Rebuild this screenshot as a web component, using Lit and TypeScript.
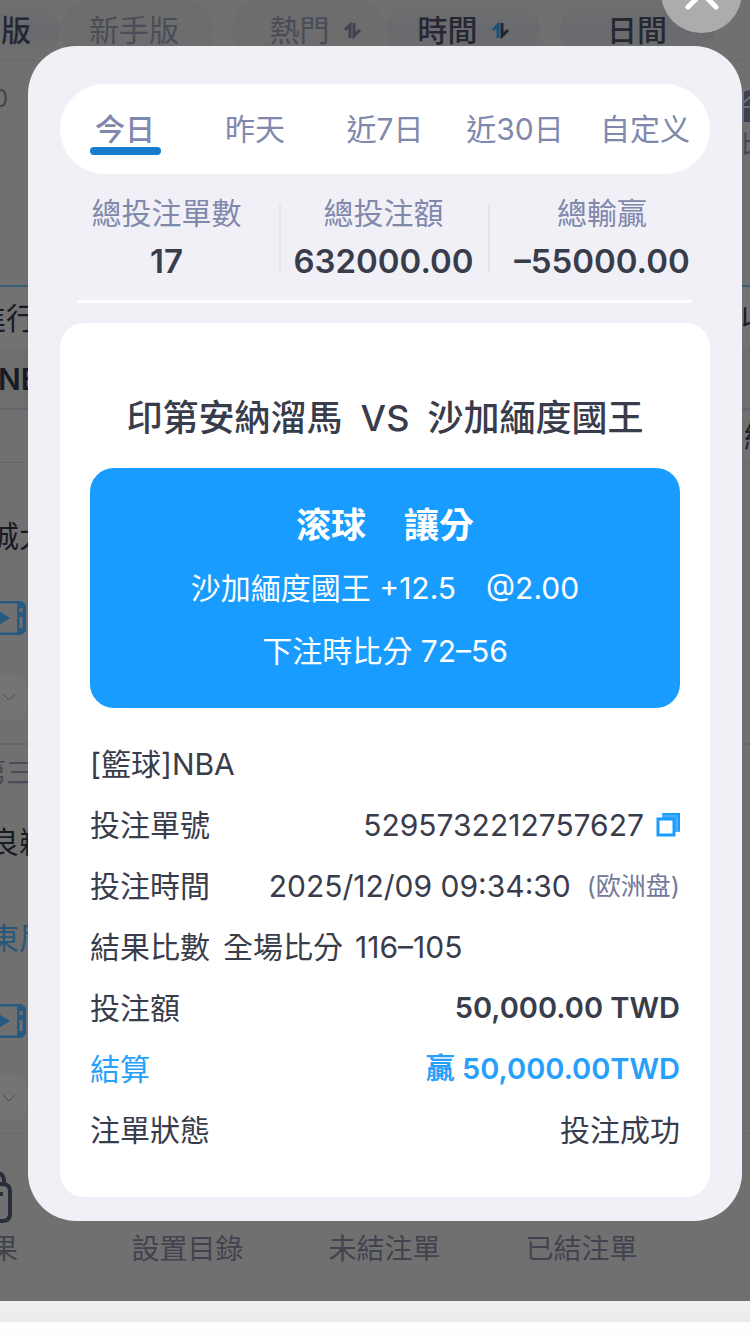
import { LitElement, html, css, svg } from "lit";
import { customElement, state } from "lit/decorators.js";

const swap = svg`
  <path class="up" d="M1 8 L6 3 V16" />
  <path class="down" d="M10 1 V14 L16 8" />
`;

@customElement("page-backdrop")
class PageBackdrop extends LitElement {
  static styles = css`
    :host {
      display: flex;
      flex-direction: column;
      min-width: 0;
      overflow: hidden;
      background: #707070;
      color: #191b24;
      font-size: 30px;
      line-height: 40px;
    }
    button {
      font: inherit;
      color: inherit;
      border: 0;
      padding: 0;
      background: none;
      white-space: nowrap;
    }
    .filters {
      display: flex;
      height: 61px;
      box-sizing: border-box;
      border-bottom: 1px solid #696969;
      color: #4a4c57;
      margin-left: -76px;
    }
    .pill {
      height: 60px;
      box-sizing: border-box;
      border-radius: 30px;
      display: flex;
      align-items: center;
      justify-content: center;
      gap: 14px;
      background: #6d6d6e;
    }
    .pill.on {
      color: #252732;
      font-weight: 500;
      background: linear-gradient(#707070, #686a6d 50%, #707070);
    }
    .a { width: 136px; justify-content: flex-end; padding-right: 29px; }
    .b { width: 154px; padding-right: 6px; }
    .c { width: 154px; margin-left: 18px; padding-left: 12px; }
    .d { width: 154px; }
    .e { width: 154px; margin-left: 20px; }
    .swap { width: 17px; height: 17px; fill: none; stroke: #41434e; stroke-width: 3; }
    .on .up { stroke: #17507d; }
    .on .down { stroke: #1f2533; }
    .row {
      display: flex;
      justify-content: space-between;
      align-items: center;
      white-space: nowrap;
      box-sizing: border-box;
      margin-left: -24px;
    }
    .edge { width: 9px; flex: none; }
    .odds { height: 224px; color: #43454f; font-size: 24px; align-items: flex-start; padding-top: 18px; }
    .odds .left { padding-left: 17px; }
    .mark { width: 40px; height: 40px; display: block; margin-top: 6px; fill: #3d4050; stroke: #70727c; stroke-width: 2; }
    .state { height: 64px; border-top: 2px solid #3a5e77; background: #727272; }
    .league { height: 61px; font-weight: 600; border-bottom: 2px solid #64646a; background: #6e6e6e; }
    .league .left { padding-left: 22px; }
    .head { height: 53px; border-bottom: 1px solid #65656a; }
    .head .edge { width: 6px; }
    .team { height: 138px; padding-top: 8px; }
    .team .left, .near .left, .blue .left { padding-left: 13px; }
    .media { height: 34px; }
    .ticket { width: 50px; height: 34px; display: block; fill: none; stroke: #265a80; stroke-width: 3; }
    .ticket .solid { fill: #265a80; stroke: none; }
    .fold { height: 110px; padding-top: 16px; border-bottom: 2px solid #65656a; }
    .foldbox { width: 51px; height: 45px; border-radius: 10px; background: #747474; display: flex; align-items: center; justify-content: flex-end; padding-right: 11px; box-sizing: border-box; }
    .chev { width: 14px; height: 8px; fill: none; stroke: #4c4c50; stroke-width: 1; }
    .period { height: 56px; color: #4a4b56; font-size: 28px; }
    .period .left { padding-left: 2px; }
    .near { height: 82px; }
    .blue { height: 121px; padding-bottom: 12px; color: #27587b; }
    .fold.last { height: 96px; padding-top: 24px; border-bottom: 1px solid #686868; }
    .nav {
      display: flex;
      margin-left: -108px;
      height: 167px;
      box-sizing: border-box;
      padding-top: 36px;
      color: #41434e;
      font-size: 28px;
    }
    .nav button { width: 197px; height: 99px; flex: none; display: flex; flex-direction: column; align-items: center; justify-content: flex-end; }
    .nav .first { align-items: flex-end; padding-right: 71px; box-sizing: border-box; }
    .bag { width: 38px; height: 52px; flex: none; margin: 0 6px 6px 0; fill: none; stroke: #2a2e3c; stroke-width: 4; }
    .bar { height: 21px; background: linear-gradient(#f2f2f2, #eaeaea); }
    .foot { flex: 1; min-height: 12px; background: #fdfdfd; }
  `;

  private ticket() {
    return html`<svg class="ticket" viewBox="0 0 50 34">
      <rect x="1" y="1" width="48" height="32" rx="7" />
      <path class="solid" d="M23 10L34 17L23 24Z" />
      <path class="solid" d="M41 1H43C48 1 50 4 50 8V26C50 30 48 33 43 33H41Z" />
      <path d="M45 7V11M45 16V27" stroke="#707070" />
    </svg>`;
  }

  private fold(last = false) {
    return html`<div class="row fold ${last ? "last" : ""}">
      <div class="foldbox"><svg class="chev" viewBox="0 0 14 8"><path d="M1 1L7 7L13 1" /></svg></div>
    </div>`;
  }

  render() {
    return html`
      <div class="filters">
        <button class="pill on a">專業版</button>
        <button class="pill b">新手版</button>
        <button class="pill c">熱門<svg class="swap" viewBox="0 0 17 17">${swap}</svg></button>
        <button class="pill on d">時間<svg class="swap" viewBox="0 0 17 17">${swap}</svg></button>
        <button class="pill on e">日間</button>
      </div>
      <div class="row odds">
        <span class="left">0</span>
        <span class="edge"><svg class="mark" viewBox="0 0 40 40"><path d="M2 6L20 0L38 6V38H2Z" /><path d="M2 18L14 8M0 22H40" /></svg><span>比</span></span>
      </div>
      <div class="row state"><span class="left">進行</span><span class="edge">收</span></div>
      <div class="row league"><span class="left">NBA</span></div>
      <div class="row head"><span></span><span class="edge">總</span></div>
      <div class="row team"><span class="left">城大</span></div>
      <div class="row media">${this.ticket()}</div>
      ${this.fold()}
      <div class="row period"><span class="left">第三</span></div>
      <div class="row near"><span class="left">良鵜</span></div>
      <div class="row blue"><span class="left">東尼</span></div>
      <div class="row media">${this.ticket()}</div>
      ${this.fold(true)}
      <div class="nav">
        <button class="first"><svg class="bag" viewBox="0 0 38 52"><path d="M4 13H28Q36 13 36 20V43Q36 50 28 50H4ZM30 13V10Q30 2 22 2M18 23H29" /></svg>賽果</button>
        <button>設置目錄</button>
        <button>未結注單</button>
        <button>已結注單</button>
      </div>
      <div class="bar"></div>
      <div class="foot"></div>
    `;
  }
}

@customElement("bet-history")
class BetHistory extends LitElement {
  @state() private active = 0;

  static styles = css`
    :host {
      display: block;
      position: relative;
      box-sizing: border-box;
      border-radius: 48px;
      padding: 38px 32px 24px;
      background: #f1f0f6;
      color: #393c4b;
      font-size: 30px;
      line-height: 40px;
      white-space: nowrap;
    }
    button { font: inherit; color: inherit; border: 0; padding: 0; background: none; }
    .close { position: absolute; right: 0; top: -94px; width: 81px; height: 81px; border-radius: 50%; background: #acacac; }
    .close svg { width: 36px; height: 36px; display: block; margin: auto; fill: none; stroke: #fff; stroke-width: 5; stroke-linecap: round; }
    .tabs { display: grid; grid-template-columns: repeat(5, 1fr); height: 90px; border-radius: 45px; background: #fff; color: #8088ac; }
    .tab { display: flex; flex-direction: column; align-items: center; padding-top: 25px; }
    .tab.on { font-weight: 500; }
    .tab.on::after { content: ""; width: 71px; height: 8px; margin-top: -2px; border-radius: 4px; background: #147dce; }
    .stats { display: grid; grid-template-columns: 225fr 209fr 228fr; margin: 0 -6px; padding-top: 19px; }
    .stat { text-align: center; display: flex; flex-direction: column; gap: 8px; position: relative; }
    .stat + .stat::before { content: ""; position: absolute; left: 0; top: 11px; width: 2px; height: 69px; background: #e4e5eb; }
    .label { color: #8088ac; }
    .value { font-size: 33px; font-weight: 600; }
    .rule { border: 0; height: 3px; margin: 19px 18px 0; background: #fff; border-radius: 2px; }
    .card { margin-top: 20px; padding: 75px 30px 37px; border-radius: 24px; background: #fff; }
    h2 { margin: 0; font-size: 36px; line-height: 40px; font-weight: 500; display: flex; justify-content: center; gap: 18px; }
    .pick { margin-top: 30px; padding: 37px 20px; border-radius: 24px; background: #189cff; color: #fff; display: flex; flex-direction: column; gap: 23px; }
    .pick div { display: flex; justify-content: center; gap: 30px; }
    .pick .kind { font-size: 35px; font-weight: 700; gap: 38px; }
    .rows { margin: 25px 0 0; }
    .row { display: flex; justify-content: space-between; align-items: center; height: 61px; }
    .row.plain { justify-content: flex-start; gap: 13px; }
    dt, dd { margin: 0; }
    dd { display: flex; align-items: center; }
    .plain dd { gap: 12px; }
    .copy { width: 24px; height: 24px; margin-left: 12px; }
    .copy svg { display: block; width: 24px; height: 24px; }
    .zone { font-size: 25px; color: #74799a; margin-left: 16px; }
    .strong { font-size: 29px; font-weight: 600; }
    .win { color: #27a0fb; }
  `;

  private tabs = ["今日", "昨天", "近7日", "近30日", "自定义"];
  private stats = [["總投注單數", "17"], ["總投注額", "632000.00"], ["總輸贏", "–55000.00"]];

  render() {
    return html`
      <button class="close" aria-label="關閉"><svg viewBox="0 0 36 36"><path d="M4 4L32 32M32 4L4 32" /></svg></button>
      <div class="tabs" role="tablist">
        ${this.tabs.map((t, i) => html`<button role="tab" class="tab ${i === this.active ? "on" : ""}"
          aria-selected=${i === this.active} @click=${() => (this.active = i)}>${t}</button>`)}
      </div>
      <div class="stats">
        ${this.stats.map(([l, v]) => html`<div class="stat"><span class="label">${l}</span><span class="value">${v}</span></div>`)}
      </div>
      <hr class="rule" />
      <section class="card">
        <h2><span>印第安納溜馬</span><span>VS</span><span>沙加緬度國王</span></h2>
        <div class="pick">
          <div class="kind"><span>滚球</span><span>讓分</span></div>
          <div><span>沙加緬度國王 +12.5</span><span>@2.00</span></div>
          <div><span>下注時比分 72–56</span></div>
        </div>
        <dl class="rows">
          <div class="row"><dt>[籃球]NBA</dt></div>
          <div class="row"><dt>投注單號</dt><dd>5295732212757627<button class="copy" aria-label="複製"><svg viewBox="0 0 24 24"><path d="M6 0H24V19H19V5H6Z" fill="#48adfb" /><path d="M7 1H23V18" fill="none" stroke="#189cff" stroke-width="2" /><rect x="2" y="6" width="16" height="16" fill="#fff" stroke="#189cff" stroke-width="3" /></svg></button></dd></div>
          <div class="row"><dt>投注時間</dt><dd>2025/12/09 09:34:30<span class="zone">(欧洲盘)</span></dd></div>
          <div class="row plain"><dt>結果比數</dt><dd><span>全場比分</span><span>116–105</span></dd></div>
          <div class="row"><dt>投注額</dt><dd class="strong">50,000.00 TWD</dd></div>
          <div class="row win"><dt>結算</dt><dd class="strong">贏&nbsp;50,000.00TWD</dd></div>
          <div class="row"><dt>注單狀態</dt><dd>投注成功</dd></div>
        </dl>
      </section>
    `;
  }
}

@customElement("app-root")
class AppRoot extends LitElement {
  static styles = css`
    :host {
      display: grid;
      min-height: 100vh;
      overflow: hidden;
      font-family: Inter, "Noto Sans CJK TC", sans-serif;
    }
    .layer { grid-area: 1 / 1; min-width: 0; }
    .overlay { padding: 46px 8px 0 28px; z-index: 1; }
  `;

  render() {
    return html`
      <page-backdrop class="layer"></page-backdrop>
      <div class="layer overlay"><bet-history></bet-history></div>
    `;
  }
}
